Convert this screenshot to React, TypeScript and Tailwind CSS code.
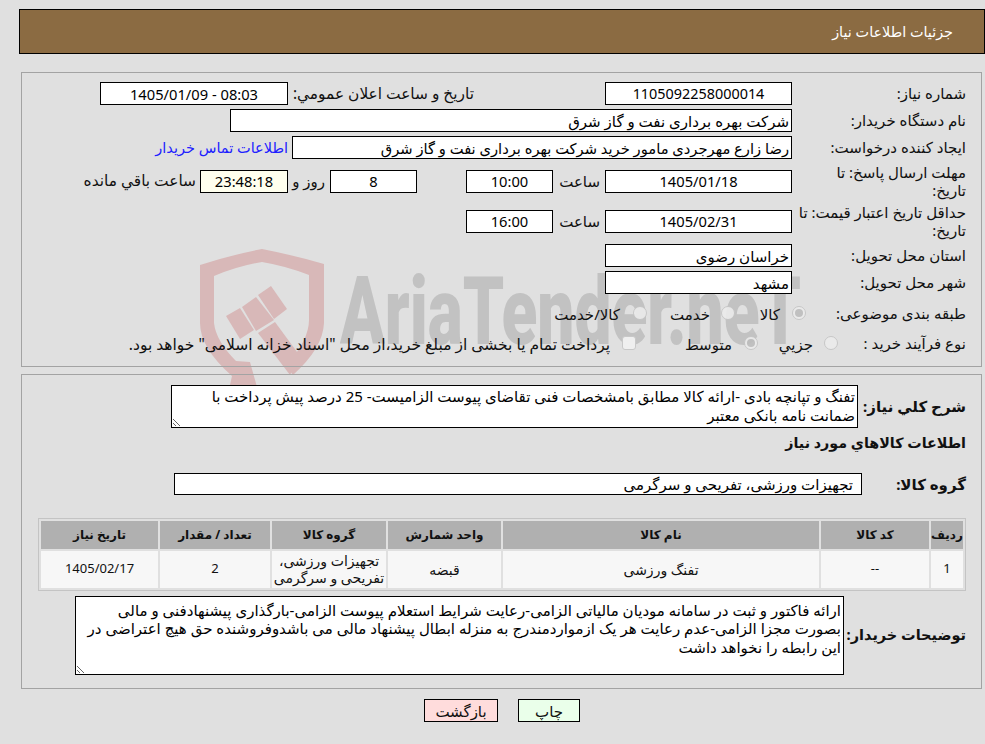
import React from "react";

const Field = ({ value, className = "", center = true }: { value: string; className?: string; center?: boolean }) => (
  <input
    readOnly
    value={value}
    dir="rtl"
    className={`h-[23px] border border-black bg-white px-[2px] text-black outline-none ${center ? "text-center text-[14.7px]" : "text-right"} ${className}`}
  />
);

const Radio = ({ checked = false }: { checked?: boolean }) => (
  <span className="flex h-[14px] w-[14px] shrink-0 items-center justify-center rounded-full border border-[#c4c4c4] bg-[#ececec] opacity-90">
    {checked && <span className="h-[8px] w-[8px] rounded-full bg-[#bdbdbd]" />}
  </span>
);

const Watermark = () => (
  <>
    <svg className="absolute left-[198px] top-[248px] h-[137px] w-[130px]" viewBox="0 0 130 137" fill="#d8b8b8">
      <path d="M2 17 Q33 7 64 1 Q95 7 126 16 L126 75 Q125 100 95 127 L88 118 Q111 92 111 72 L111 27 Q88 18 64 14 Q40 18 16 28 L16 75 Q18 93 38 113 L52 114 L59 139 L32 137 L34 128 Q2 100 2 75 Z" />
      <polygon points="28,68 42,60 56,82 42,91" />
      <polygon points="44,59 58,49 76,72 58,83" />
      <polygon points="60,47 73,38 89,61 76,71" />
      <polygon points="60,85 77,74 102,108 92,127" />
    </svg>
    <div
      dir="ltr"
      className="absolute left-[340px] top-[252px] origin-left scale-x-[0.7] whitespace-nowrap font-['Roboto',sans-serif] text-[94px] font-black leading-[120px] text-[#c2c2c2]"
    >
      AriaTender.neT
    </div>
  </>
);

export default function App() {
  return (
    <div
      dir="rtl"
      className="relative min-h-screen overflow-hidden bg-[#e0e0e0] pt-[9px] font-['Noto_Sans','DejaVu_Sans',sans-serif] text-[15px] text-[#111]"
    >
      <Watermark />

      <header className="relative ml-[19px] flex h-[45px] items-center border border-black bg-[#8b6b42] pr-[31px] text-[14.4px] text-white">
        جزئیات اطلاعات نیاز
      </header>

      <section className="relative ml-[21px] mr-[3px] mt-[18px] h-[295px] border border-[#a3a3a3] pt-[9px]">
        <div className="flex h-[23px] items-center">
          <label className="w-[189px] pr-[15px]">شماره نیاز:</label>
          <Field value="1105092258000014" className="w-[187px] !text-[14.4px]" />
          <span className="ms-[131px] w-[186px] text-[15.4px]">تاريخ و ساعت اعلان عمومي:</span>
          <Field value="08:03 - 1405/01/09" className="w-[188px]" />
        </div>
        <div className="mt-[4px] flex h-[23px] items-center">
          <label className="w-[189px] pr-[15px]">نام دستگاه خریدار:</label>
          <Field value="شرکت بهره برداری نفت و گاز شرق" center={false} className="w-[562px]" />
        </div>
        <div className="mt-[4px] flex h-[23px] items-center">
          <label className="w-[189px] pr-[15px]">ایجاد کننده درخواست:</label>
          <Field value="رضا زارع مهرجردی مامور خرید شرکت بهره برداری نفت و گاز شرق" center={false} className="w-[500px] !text-[14.7px]" />
          <a href="#" className="ms-[4px] text-[14.5px] text-[#2020ff]">اطلاعات تماس خریدار</a>
        </div>
        <div className="mt-[4px] flex h-[36px] items-center">
          <label className="w-[189px] whitespace-nowrap pr-[15px] leading-[18px]">مهلت ارسال پاسخ: تا<br />تاریخ:</label>
          <Field value="1405/01/18" className="w-[187px]" />
          <span className="w-[52px] pr-[5px]">ساعت</span>
          <Field value="10:00" className="w-[87px]" />
          <span className="w-[49px]" />
          <Field value="8" className="w-[87px]" />
          <span className="w-[42px] pr-[5px]">روز و</span>
          <Field value="23:48:18" className="w-[88px] !bg-[#ffffee]" />
          <span className="pr-[4px] text-[15.4px]">ساعت باقي مانده</span>
        </div>
        <div className="mt-[4px] flex h-[36px] items-center">
          <label className="w-[189px] whitespace-nowrap pr-[15px] leading-[18px]">حداقل تاریخ اعتبار قیمت: تا<br />تاریخ:</label>
          <Field value="1405/02/31" className="w-[187px]" />
          <span className="w-[52px] pr-[5px]">ساعت</span>
          <Field value="16:00" className="w-[87px]" />
        </div>
        <div className="mt-[5px] flex h-[23px] items-center">
          <label className="w-[189px] pr-[15px]">استان محل تحویل:</label>
          <Field value="خراسان رضوی" center={false} className="w-[187px]" />
        </div>
        <div className="mt-[4px] flex h-[23px] items-center">
          <label className="w-[189px] pr-[15px]">شهر محل تحویل:</label>
          <Field value="مشهد" center={false} className="w-[187px]" />
        </div>
        <div className="mt-[6px] flex h-[26px] items-center">
          <label className="w-[175px] pr-[15px]">طبقه بندی موضوعی:</label>
          <Radio checked />
          <span className="w-[57px] pr-[12px] pt-[3px]">کالا</span>
          <Radio />
          <span className="w-[74px] pr-[11px] pt-[3px]">خدمت</span>
          <Radio />
          <span className="pr-[13px] pt-[3px]">کالا/خدمت</span>
        </div>
        <div className="mt-[4px] flex h-[26px] items-center">
          <label className="w-[143px] pr-[15px]">نوع فرآیند خرید :</label>
          <Radio />
          <span className="w-[66px] pr-[11px] pt-[3px]">جزيي</span>
          <Radio checked />
          <span className="w-[108px] pr-[12px] pt-[3px]">متوسط</span>
          <span className="h-[14px] w-[14px] shrink-0 rounded-[3px] border border-[#c8c8c8] bg-[#efefef]" />
          <span className="whitespace-nowrap pr-[12px] pt-[3px] text-[15.5px]">پرداخت تمام یا بخشی از مبلغ خرید،از محل "اسناد خزانه اسلامی" خواهد بود.</span>
        </div>
      </section>

      <section className="relative ml-[21px] mr-[3px] mt-[7px] h-[315px] border border-[#a3a3a3] pt-[10px]">
        <div className="flex items-center">
          <label className="w-[123px] pr-[15px] text-[15px] font-bold">شرح کلي نياز:</label>
          <textarea
            readOnly
            dir="rtl"
            defaultValue="تفنگ و تپانچه بادی -ارائه کالا مطابق بامشخصات فنی تقاضای پیوست الزامیست- 25 درصد پیش پرداخت با ضمانت نامه بانکی معتبر"
            className="h-[43px] w-[687px] border border-black bg-white px-[2px] pt-[1px] leading-[19px] text-black outline-none"
          />
        </div>
        <h2 className="flex h-[30px] items-center pr-[15px] text-[14.3px] font-bold">اطلاعات کالاهاي مورد نياز</h2>
        <div className="mt-[15px] flex items-center">
          <label className="w-[119px] pr-[15px] text-[15px] font-bold">گروه کالا:</label>
          <input
            readOnly
            dir="rtl"
            value="تجهیزات ورزشی، تفریحی و سرگرمی"
            className="h-[22px] w-[688px] border border-black bg-white pr-[8px] text-black outline-none"
          />
        </div>
        <table className="mr-[15px] mt-[22px] w-[928px] table-fixed border-separate border-spacing-[2px] border border-[#c4c4c4] text-center">
          <colgroup>
            <col className="w-[32px]" />
            <col className="w-[108px]" />
            <col className="w-[316px]" />
            <col className="w-[113px]" />
            <col className="w-[114px]" />
            <col className="w-[110px]" />
            <col className="w-[117px]" />
          </colgroup>
          <thead>
            <tr className="h-[28px] bg-[#b0b0b0] text-[12px] font-bold">
              <th>ردیف</th>
              <th>کد کالا</th>
              <th>نام کالا</th>
              <th>واحد شمارش</th>
              <th>گروه کالا</th>
              <th>تعداد / مقدار</th>
              <th>تاریخ نیاز</th>
            </tr>
          </thead>
          <tbody>
            <tr className="h-[37px] bg-[#f7f7f7] text-[14px]">
              <td className="text-[13px]">1</td>
              <td className="text-[13px]">--</td>
              <td>تفنگ ورزشی</td>
              <td>قبضه</td>
              <td className="leading-[17px]">تجهیزات ورزشی، تفریحی و سرگرمی</td>
              <td className="text-[13px]">2</td>
              <td className="text-[13px]">1405/02/17</td>
            </tr>
          </tbody>
        </table>
        <div className="mt-[5px] flex items-center">
          <label className="w-[137px] whitespace-nowrap pr-[15px] text-[14.5px] font-bold">توضیحات خریدار:</label>
          <textarea
            readOnly
            dir="rtl"
            defaultValue="ارائه فاکتور و ثبت در سامانه مودیان مالیاتی الزامی-رعایت شرایط استعلام پیوست الزامی-بارگذاری پیشنهادفنی و مالی بصورت مجزا الزامی-عدم رعایت هر یک ازمواردمندرج به منزله ابطال پیشنهاد مالی می باشدوفروشنده حق هیچ اعتراضی در این رابطه را نخواهد داشت"
            className="h-[79px] w-[769px] border border-black bg-white px-[2px] pt-[4px] leading-[18.5px] text-black outline-none"
          />
        </div>
      </section>

      <div className="relative mt-[10px] flex pr-[405px]">
        <div className="flex gap-[20px]">
          <button className="h-[23px] w-[62px] border border-black bg-[#eaffea]">چاپ</button>
          <button className="h-[23px] w-[74px] border border-black bg-[#ffdcdc]">بازگشت</button>
        </div>
      </div>
    </div>
  );
}
